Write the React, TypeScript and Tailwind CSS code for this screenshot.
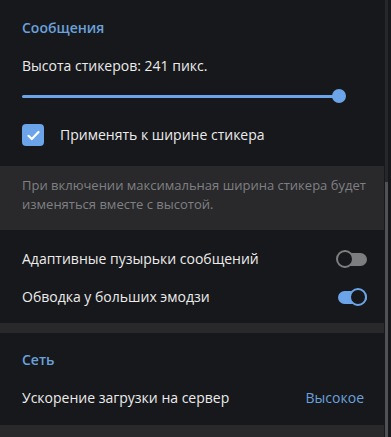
import React from "react";

function Toggle({ on }: { on: boolean }) {
  return (
    <div className="relative w-[31px] h-[18px] flex items-center">
      <div
        className={`absolute left-[2px] right-0 h-[13px] rounded-full ${
          on ? "bg-[#6ba4e8]" : "bg-[#7d7e80]"
        }`}
      />
      <div
        className={`absolute top-0 w-[18px] h-[18px] rounded-full border-2 bg-[#17181b] ${
          on ? "right-0 border-[#6ba4e8]" : "left-0 border-[#7d7e80]"
        }`}
      />
    </div>
  );
}

export default function App() {
  return (
    <div
      className="w-[391px] h-[437px] overflow-hidden bg-[#17181b] flex text-[#ececec]"
      style={{ fontFamily: '"Open Sans", "Noto Sans", sans-serif' }}
    >
      <div className="w-[384px] flex flex-col">
        {/* Messages */}
        <div className="px-[22px] pt-[18px]">
          <p className="text-[14px] leading-[20px] font-semibold text-[#6aa1dc]">Сообщения</p>
          <p className="mt-[18px] text-[14px] leading-[20px]">Высота стикеров: 241 пикс.</p>
          <div className="mt-[13px] h-[14px] flex items-center w-[324px]">
            <div className="flex-1 h-[3px] bg-[#6ba4e8] rounded-l-full" />
            <div className="w-[14px] h-[14px] rounded-full bg-[#6ba4e8] -ml-[7px]" />
          </div>
          <div className="mt-[21px] flex items-center gap-[16px] h-[22px]">
            <div className="w-[22px] h-[22px] rounded-[4px] bg-[#6ba4e8] flex items-center justify-center">
              <svg width="13" height="11" viewBox="0 0 13 11" fill="none">
                <path d="M1.5 5.8 L4.8 9 L11.5 2" stroke="#fff" strokeWidth="2.2" strokeLinecap="round" strokeLinejoin="round" />
              </svg>
            </div>
            <span className="text-[14px] leading-[20px]">Применять к ширине стикера</span>
          </div>
        </div>

        {/* Info box */}
        <div className="mt-[20px] h-[65px] bg-[#29292b] pl-[22px] pt-[10px]">
          <p className="text-[13px] leading-[19px] whitespace-nowrap text-[#7f8083]">
            При включении максимальная ширина стикера будет
            <br />
            изменяться вместе с высотой.
          </p>
        </div>

        {/* Toggles */}
        <div className="pr-[17px] pl-[22px] pt-[19px]">
          <div className="flex items-center justify-between h-[20px]">
            <span className="text-[14px] leading-[20px]">Адаптивные пузырьки сообщений</span>
            <Toggle on={false} />
          </div>
          <div className="mt-[18px] flex items-center justify-between h-[20px]">
            <span className="text-[14px] leading-[20px]">Обводка у больших эмодзи</span>
            <Toggle on={true} />
          </div>
        </div>

        <div className="mt-[16px] h-[10px] bg-[#29292b]" />

        {/* Network */}
        <div className="pl-[22px] pr-[20px] pt-[17px]">
          <p className="text-[14px] leading-[20px] font-semibold text-[#6aa1dc]">Сеть</p>
          <div className="mt-[18px] flex items-center justify-between h-[20px]">
            <span className="text-[14px] leading-[20px]">Ускорение загрузки на сервер</span>
            <span className="text-[14px] leading-[20px] text-[#6aa1dc]">Высокое</span>
          </div>
        </div>

        <div className="mt-[17px] h-[12px] bg-[#29292b]" />
      </div>

      {/* Scrollbar */}
      <div className="ml-[1px] w-[3px] flex flex-col bg-[#26272a]">
        <div className="h-[182px]" />
        <div className="flex-1 bg-[#505154]" />
      </div>
    </div>
  );
}
